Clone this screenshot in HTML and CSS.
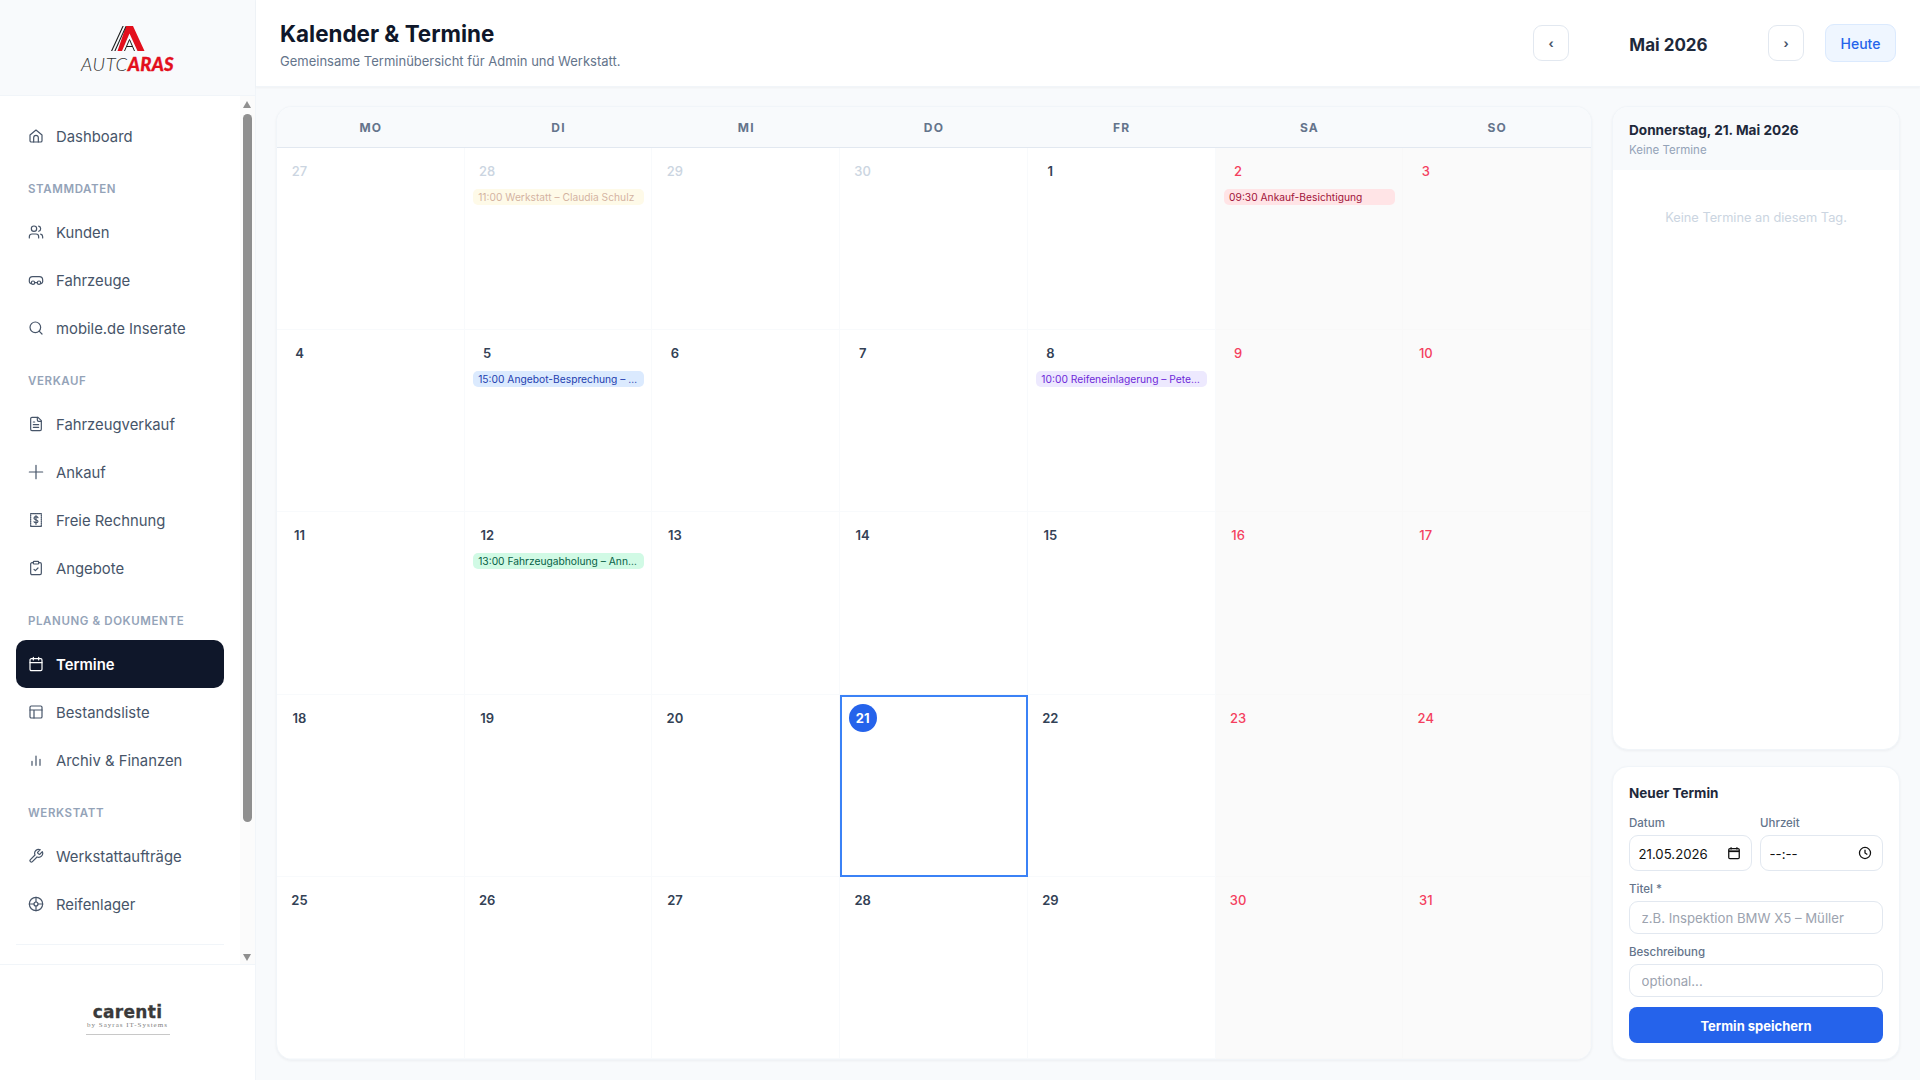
FILE: index.html
```html
<!DOCTYPE html>
<html lang="de">
<head>
  <meta charset="UTF-8">
  <meta name="viewport" content="width=device-width, initial-scale=1.0">
  <title>Kalender &amp; Termine</title>
  <link rel="stylesheet" href="styles.css">
</head>
<body>
  <div class="app">

    <aside class="sidebar">
      <div class="logo-box">
        <svg class="logo-mark" viewBox="0 0 34 25">
          <polygon fill="#e30f1c" points="15,0 22,0 33.500,25 26.500,25 18.500,7.500 11,25 6.500,25"/>
          <polygon fill="#1a1a1a" points="0,25 1.200,25 12.700,0 11.500,0"/>
          <polygon fill="#1a1a1a" points="3.300,25 4.500,25 15.200,1 14.600,0"/>
          <path d="M13.500 25 18.500 13.500 23.500 25M15.500 20.500h6" fill="none" stroke="#1a1a1a" stroke-width="1"/>
        </svg>
        <div class="logo-text"><span class="logo-thin">AUTC</span><span class="logo-bold">ARAS</span></div>
      </div>

      <div class="nav-wrap">
        <nav class="nav">
          <a class="nav-item">
            <svg class="icon" viewBox="0 0 24 24"><path d="M3 10.500 12 3l9 7.500V19a2 2 0 0 1-2 2H5a2 2 0 0 1-2-2z"/><path d="M8.500 21v-6.500a3.500 3.500 0 0 1 7 0V21"/></svg>
            Dashboard
          </a>

          <div class="nav-label">STAMMDATEN</div>
          <a class="nav-item">
            <svg class="icon" viewBox="0 0 24 24"><path d="M16 21v-2a4 4 0 0 0-4-4H6a4 4 0 0 0-4 4v2"/><circle cx="9" cy="7" r="4"/><path d="M22 21v-2a4 4 0 0 0-3-3.870"/><path d="M16 3.130a4 4 0 0 1 0 7.750"/></svg>
            Kunden
          </a>
          <a class="nav-item">
            <svg class="icon" viewBox="0 0 24 24"><path d="M4.500 17.500C3 17 2 16 2 14.500V12c0-3 2-5 5-5h10c3 0 5 2 5 5v2.500c0 1.500-1 2.500-2.500 3"/><circle cx="7.500" cy="16" r="2.500"/><circle cx="16.500" cy="16" r="2.500"/><path d="M10 16h4"/></svg>
            Fahrzeuge
          </a>
          <a class="nav-item">
            <svg class="icon" viewBox="0 0 24 24"><circle cx="11" cy="11" r="8"/><path d="m21 21-4.300-4.300"/></svg>
            mobile.de Inserate
          </a>

          <div class="nav-label">VERKAUF</div>
          <a class="nav-item">
            <svg class="icon" viewBox="0 0 24 24"><path d="M15 2H6a2 2 0 0 0-2 2v16a2 2 0 0 0 2 2h12a2 2 0 0 0 2-2V7z"/><path d="M14 2v4a2 2 0 0 0 2 2h4"/><path d="M8 9h2M8 13h8M8 17h8"/></svg>
            Fahrzeugverkauf
          </a>
          <a class="nav-item">
            <svg class="icon" viewBox="0 0 24 24"><path d="M12 2v20M2 12h20"/></svg>
            Ankauf
          </a>
          <a class="nav-item">
            <svg class="icon" viewBox="0 0 24 24"><rect x="4" y="2.500" width="16" height="19" stroke-dasharray="2 1"/><path d="M15 8.500c-.5-1-1.600-1.500-3-1.500-1.700 0-3 .8-3 2.300 0 3 6 1.700 6 4.700 0 1.400-1.300 2.200-3 2.200-1.400 0-2.500-.6-3-1.600M12 5.500v13"/></svg>
            Freie Rechnung
          </a>
          <a class="nav-item">
            <svg class="icon" viewBox="0 0 24 24"><rect x="8" y="2" width="8" height="4" rx="1"/><path d="M16 4h2a2 2 0 0 1 2 2v14a2 2 0 0 1-2 2H6a2 2 0 0 1-2-2V6a2 2 0 0 1 2-2h2"/><path d="m9 14 2 2 4-4"/></svg>
            Angebote
          </a>

          <div class="nav-label">PLANUNG &amp; DOKUMENTE</div>
          <a class="nav-item active">
            <svg class="icon" viewBox="0 0 24 24"><path d="M8 2v4M16 2v4"/><rect x="3" y="4" width="18" height="18" rx="2"/><path d="M3 10h18"/></svg>
            Termine
          </a>
          <a class="nav-item">
            <svg class="icon" viewBox="0 0 24 24"><rect x="3" y="3" width="18" height="18" rx="2"/><path d="M3 9h18M9 21V9"/></svg>
            Bestandsliste
          </a>
          <a class="nav-item">
            <svg class="icon" viewBox="0 0 24 24"><path d="M6 20v-6M12 20V6M18 20v-9"/></svg>
            Archiv &amp; Finanzen
          </a>

          <div class="nav-label">WERKSTATT</div>
          <a class="nav-item">
            <svg class="icon" viewBox="0 0 24 24"><path d="M14.700 6.300a1 1 0 0 0 0 1.400l1.600 1.600a1 1 0 0 0 1.400 0l3.770-3.770a6 6 0 0 1-7.940 7.940l-6.910 6.910a2.120 2.120 0 0 1-3-3l6.910-6.910a6 6 0 0 1 7.940-7.940l-3.760 3.760z"/></svg>
            Werkstattaufträge
          </a>
          <a class="nav-item">
            <svg class="icon" viewBox="0 0 24 24"><circle cx="12" cy="12" r="10"/><circle cx="12" cy="12" r="3"/><path d="M12 2v7M12 15v7M2 12h7M15 12h7"/></svg>
            Reifenlager
          </a>
          <div class="nav-divider"></div>
        </nav>

        <div class="scrollbar">
          <span class="scroll-up"></span>
          <span class="scroll-thumb"></span>
          <span class="scroll-down"></span>
        </div>
      </div>

      <div class="sidebar-footer">
        <div class="carenti">
          <div class="carenti-name">carenti</div>
          <div class="carenti-sub">by Sayras IT-Systems</div>
        </div>
      </div>
    </aside>

    <main class="main">
      <header class="topbar">
        <div class="topbar-title">
          <h1>Kalender &amp; Termine</h1>
          <p>Gemeinsame Terminübersicht für Admin und Werkstatt.</p>
        </div>
        <div class="month-nav">
          <button class="nav-btn">‹</button>
          <span class="month-name">Mai 2026</span>
          <button class="nav-btn">›</button>
          <button class="today-btn">Heute</button>
        </div>
      </header>

      <div class="content">
        <section class="calendar">
          <div class="cal-head">
            <div>MO</div><div>DI</div><div>MI</div><div>DO</div><div>FR</div><div>SA</div><div>SO</div>
          </div>
          <div class="cal-grid">
            <div class="day other"><span class="num">27</span></div>
            <div class="day other"><span class="num">28</span><div class="chip amber">11:00 Werkstatt – Claudia Schulz</div></div>
            <div class="day other"><span class="num">29</span></div>
            <div class="day other"><span class="num">30</span></div>
            <div class="day"><span class="num">1</span></div>
            <div class="day weekend"><span class="num">2</span><div class="chip red">09:30 Ankauf-Besichtigung</div></div>
            <div class="day weekend"><span class="num">3</span></div>

            <div class="day"><span class="num">4</span></div>
            <div class="day"><span class="num">5</span><div class="chip blue">15:00 Angebot-Besprechung – Max Weber</div></div>
            <div class="day"><span class="num">6</span></div>
            <div class="day"><span class="num">7</span></div>
            <div class="day"><span class="num">8</span><div class="chip purple">10:00 Reifeneinlagerung – Peter Klein</div></div>
            <div class="day weekend"><span class="num">9</span></div>
            <div class="day weekend"><span class="num">10</span></div>

            <div class="day"><span class="num">11</span></div>
            <div class="day"><span class="num">12</span><div class="chip green">13:00 Fahrzeugabholung – Anna Berger</div></div>
            <div class="day"><span class="num">13</span></div>
            <div class="day"><span class="num">14</span></div>
            <div class="day"><span class="num">15</span></div>
            <div class="day weekend"><span class="num">16</span></div>
            <div class="day weekend"><span class="num">17</span></div>

            <div class="day"><span class="num">18</span></div>
            <div class="day"><span class="num">19</span></div>
            <div class="day"><span class="num">20</span></div>
            <div class="day selected"><span class="num">21</span></div>
            <div class="day"><span class="num">22</span></div>
            <div class="day weekend"><span class="num">23</span></div>
            <div class="day weekend"><span class="num">24</span></div>

            <div class="day"><span class="num">25</span></div>
            <div class="day"><span class="num">26</span></div>
            <div class="day"><span class="num">27</span></div>
            <div class="day"><span class="num">28</span></div>
            <div class="day"><span class="num">29</span></div>
            <div class="day weekend"><span class="num">30</span></div>
            <div class="day weekend"><span class="num">31</span></div>
          </div>
        </section>

        <div class="side">
          <section class="day-card">
            <div class="day-card-head">
              <h2>Donnerstag, 21. Mai 2026</h2>
              <p>Keine Termine</p>
            </div>
            <div class="day-card-empty">Keine Termine an diesem Tag.</div>
          </section>

          <form class="form-card">
            <h3>Neuer Termin</h3>
            <div class="form-row">
              <div class="field">
                <label>Datum</label>
                <div class="input-wrap">
                  <input class="tall dark" type="text" value="21.05.2026">
                  <svg class="input-icon" viewBox="0 0 24 24"><path d="M7 2v4M17 2v4"/><rect x="3" y="4.500" width="18" height="17" rx="2"/><path d="M3 9h18" stroke-width="3"/></svg>
                </div>
              </div>
              <div class="field">
                <label>Uhrzeit</label>
                <div class="input-wrap">
                  <input class="tall dark" type="text" value="--:--">
                  <svg class="input-icon" viewBox="0 0 24 24"><circle cx="12" cy="12" r="9.500"/><path d="M12 6.500V12l4 2.500"/></svg>
                </div>
              </div>
            </div>
            <div class="field">
              <label>Titel *</label>
              <input type="text" placeholder="z.B. Inspektion BMW X5 – Müller">
            </div>
            <div class="field">
              <label>Beschreibung</label>
              <input type="text" placeholder="optional...">
            </div>
            <button class="save-btn" type="button">Termin speichern</button>
          </form>
        </div>
      </div>
    </main>

  </div>
</body>
</html>
```

FILE: styles.css
```css
* {
  box-sizing: border-box;
}

body {
  margin: 0;
  font-family: Inter, "Liberation Sans", sans-serif;
  background-color: #f8fafc;
  color: #1e293b;
}

.app {
  display: flex;
  height: 100vh;
  overflow: hidden;
}

/* Sidebar */
.sidebar {
  width: 256px;
  flex-shrink: 0;
  display: flex;
  flex-direction: column;
  background-color: #ffffff;
  border-right: 1px solid #f1f5f9;
}

.logo-box {
  height: 96px;
  flex-shrink: 0;
  display: flex;
  flex-direction: column;
  align-items: center;
  padding-top: 26px;
  background-color: #f8fafc;
  border-bottom: 1px solid #f1f5f9;
}

.logo-mark {
  width: 34px;
  height: 25px;
}

.logo-text {
  margin-top: 4px;
  font-size: 18.500px;
  line-height: 18px;
  font-style: italic;
  font-family: Lato, Inter, sans-serif;
}

.logo-thin {
  font-weight: 300;
  color: #333333;
  letter-spacing: 0.6px;
}

.logo-bold {
  font-weight: 900;
  color: #e30f1c;
  letter-spacing: 0.3px;
  -webkit-text-stroke: 0.3px #e30f1c;
}

.nav-wrap {
  position: relative;
  flex: 1;
  min-height: 0;
  overflow: hidden;
}

.nav {
  padding: 16px 31px 0 16px;
}

.nav-item {
  display: flex;
  align-items: center;
  gap: 12px;
  height: 48px;
  padding: 2px 0 0 12px;
  border-radius: 10px;
  font-size: 14.850px;
  color: #475569;
}

.nav-item.active {
  background-color: #0f172a;
  color: #ffffff;
  font-weight: 600;
}

.icon {
  width: 16px;
  height: 16px;
  margin-top: -3px;
  flex-shrink: 0;
  fill: none;
  stroke: currentColor;
  stroke-width: 1.800;
  stroke-linecap: round;
  stroke-linejoin: round;
}

.nav-label {
  display: flex;
  align-items: center;
  height: 48px;
  padding: 10px 0 0 12px;
  font-size: 11.500px;
  font-weight: 600;
  letter-spacing: 0.6px;
  color: #94a3b8;
}

.nav-divider {
  height: 1px;
  margin-top: 16px;
  background-color: #f1f5f9;
}

.scrollbar {
  position: absolute;
  top: 0;
  bottom: 0;
  right: 0;
  width: 15px;
  background-color: #fbfbfb;
}

.scroll-thumb {
  position: absolute;
  top: 18px;
  left: 3px;
  width: 9px;
  height: 708px;
  border-radius: 5px;
  background-color: #8f8f8f;
}

.scroll-up,
.scroll-down {
  position: absolute;
  left: 3px;
  border-left: 4.500px solid transparent;
  border-right: 4.500px solid transparent;
}

.scroll-up {
  top: 5px;
  border-bottom: 7px solid #8f8f8f;
}

.scroll-down {
  bottom: 3px;
  border-top: 7px solid #8f8f8f;
}

.sidebar-footer {
  height: 116px;
  flex-shrink: 0;
  display: flex;
  justify-content: center;
  padding-top: 39px;
  background-color: #ffffff;
  border-top: 1px solid #f1f5f9;
}

.carenti {
  width: 84px;
  height: 31px;
  text-align: center;
  border-bottom: 1px solid #c8c8c8;
}

.carenti-name {
  font-family: "DejaVu Sans", sans-serif;
  font-weight: 700;
  font-size: 17px;
  line-height: 17px;
  letter-spacing: 0.3px;
  color: #3a3a3a;
  -webkit-text-stroke: 0.3px #3a3a3a;
}

.carenti-sub {
  font-family: "Liberation Serif", serif;
  font-size: 7px;
  line-height: 9px;
  letter-spacing: 1px;
  white-space: nowrap;
  color: #808080;
}

/* Main */
.main {
  flex: 1;
  min-width: 0;
  display: flex;
  flex-direction: column;
}

.topbar {
  height: 87px;
  flex-shrink: 0;
  display: flex;
  justify-content: space-between;
  align-items: center;
  padding: 0 24px;
  background-color: #ffffff;
  border-bottom: 1px solid #f1f5f9;
  box-shadow: 0 1px 2px rgba(0, 0, 0, 0.04);
}

.topbar-title {
  padding-top: 4px;
}

.topbar h1 {
  margin: 0;
  font-size: 22.400px;
  line-height: 30px;
  font-weight: 700;
  color: #0f172a;
}

.topbar p {
  margin: 2px 0 0;
  font-size: 13px;
  line-height: 20px;
  color: #64748b;
}

.month-nav {
  display: flex;
  align-items: center;
  gap: 12px;
}

.nav-btn {
  width: 36px;
  height: 36px;
  padding: 0;
  background-color: #ffffff;
  border: 1px solid #e2e8f0;
  border-radius: 9px;
  font-family: inherit;
  font-size: 12px;
  font-weight: 700;
  color: #475569;
}

.month-name {
  width: 175px;
  padding-top: 3px;
  text-align: center;
  font-size: 17px;
  font-weight: 700;
  color: #1e293b;
}

.today-btn {
  width: 71px;
  height: 38px;
  margin-left: 9px;
  padding: 0;
  background-color: #eff6ff;
  border: 1px solid #dbeafe;
  border-radius: 9px;
  font-family: inherit;
  font-size: 14px;
  font-weight: 500;
  color: #2563eb;
}

.content {
  flex: 1;
  min-height: 0;
  display: flex;
  gap: 20px;
  padding: 19px 20px 20px;
}

/* Calendar */
.calendar {
  flex: 1;
  min-width: 0;
  display: flex;
  flex-direction: column;
  background-color: #ffffff;
  border: 1px solid #f1f5f9;
  border-radius: 16px;
  box-shadow: 0 1px 3px rgba(15, 23, 42, 0.05);
  overflow: hidden;
}

.cal-head {
  display: grid;
  grid-template-columns: repeat(7, 1fr);
  height: 41px;
  flex-shrink: 0;
  background-color: #f8fafc;
  border-bottom: 1px solid #e2e8f0;
}

.cal-head div {
  display: flex;
  justify-content: center;
  align-items: center;
  padding-top: 1px;
  font-size: 12px;
  font-weight: 700;
  letter-spacing: 1.200px;
  color: #64748b;
}

.cal-grid {
  flex: 1;
  min-height: 0;
  display: grid;
  grid-template-columns: repeat(7, 1fr);
  grid-template-rows: repeat(5, 1fr);
}

.day {
  min-width: 0;
  padding: 9px 7.500px 8px 8.500px;
  border-right: 1px solid #f8fafc;
  border-bottom: 1px solid #f8fafc;
}

.day.weekend {
  background-color: #fafafa;
  border-color: #f8f8f8;
}

.num {
  display: flex;
  justify-content: center;
  align-items: center;
  width: 28px;
  height: 28px;
  font-size: 13px;
  font-weight: 600;
  color: #334155;
}

.weekend .num {
  color: #f43f5e;
  font-weight: 500;
}

.other .num {
  color: #cbd5e1;
  font-weight: 500;
}

.day.selected {
  outline: 2px solid #3b82f6;
  outline-offset: -2px;
}

.selected .num {
  background-color: #2563eb;
  border-radius: 50%;
  color: #ffffff;
  font-weight: 700;
}

.chip {
  margin-top: 4px;
  height: 16px;
  padding: 0 6px 0 5px;
  border-radius: 5px;
  font-size: 10.250px;
  line-height: 16px;
  white-space: nowrap;
  overflow: hidden;
  text-overflow: ellipsis;
}

.chip.amber {
  background-color: #fef3c7;
  color: #92400e;
}

.other .chip {
  opacity: 0.4;
}

.chip.red {
  background-color: #ffe4e6;
  color: #9f1239;
}

.chip.blue {
  background-color: #dbeafe;
  color: #1e40af;
}

.chip.purple {
  background-color: #ede9fe;
  color: #6d28d9;
}

.chip.green {
  background-color: #d1fae5;
  color: #065f46;
}

/* Right column */
.side {
  width: 288px;
  flex-shrink: 0;
  display: flex;
  flex-direction: column;
  gap: 16px;
}

.day-card,
.form-card {
  background-color: #ffffff;
  border: 1px solid #f1f5f9;
  border-radius: 16px;
  box-shadow: 0 1px 3px rgba(15, 23, 42, 0.05);
}

.day-card {
  flex: 1;
  min-height: 0;
  overflow: hidden;
}

.day-card-head {
  height: 63px;
  padding: 13px 16px 0;
  background-color: #f8fafc;
}

.day-card-head h2 {
  margin: 0;
  font-size: 13.600px;
  line-height: 20px;
  font-weight: 700;
  color: #1e293b;
}

.day-card-head p {
  margin: 2px 0 0;
  font-size: 11.500px;
  line-height: 16px;
  color: #94a3b8;
}

.day-card-empty {
  padding-top: 38px;
  text-align: center;
  font-size: 12.800px;
  line-height: 20px;
  color: #cbd5e1;
}

.form-card {
  flex-shrink: 0;
  padding: 16px;
}

.form-card h3 {
  margin: 0 0 12px;
  font-size: 13.500px;
  line-height: 20px;
  font-weight: 700;
  color: #1e293b;
}

.form-row {
  display: flex;
  gap: 8px;
}

.form-row .field {
  flex: 1;
  min-width: 0;
}

.form-row label {
  margin-bottom: 3px;
}

.field {
  margin-bottom: 10px;
}

.field label {
  display: block;
  margin-bottom: 4px;
  font-size: 11.500px;
  line-height: 16px;
  font-weight: 500;
  color: #64748b;
}

.input-wrap {
  position: relative;
}

input {
  display: block;
  width: 100%;
  height: 33px;
  padding: 1px 11.500px 0;
  background-color: #ffffff;
  border: 1px solid #e2e8f0;
  border-radius: 9px;
  font-family: inherit;
  font-size: 13.200px;
}

input::placeholder {
  color: #9ca3af;
}

input.tall {
  height: 36px;
  padding: 1px 8.500px 0;
}

input.dark {
  color: #111111;
}

.input-icon {
  position: absolute;
  top: 11px;
  right: 11px;
  width: 14px;
  height: 14px;
  fill: none;
  stroke: #111111;
  stroke-width: 2.200;
}

.save-btn {
  display: block;
  width: 100%;
  height: 36px;
  padding: 1px 0 0;
  background-color: #2563eb;
  border: none;
  border-radius: 8px;
  font-family: inherit;
  font-size: 13px;
  font-weight: 700;
  color: #ffffff;
}
```
